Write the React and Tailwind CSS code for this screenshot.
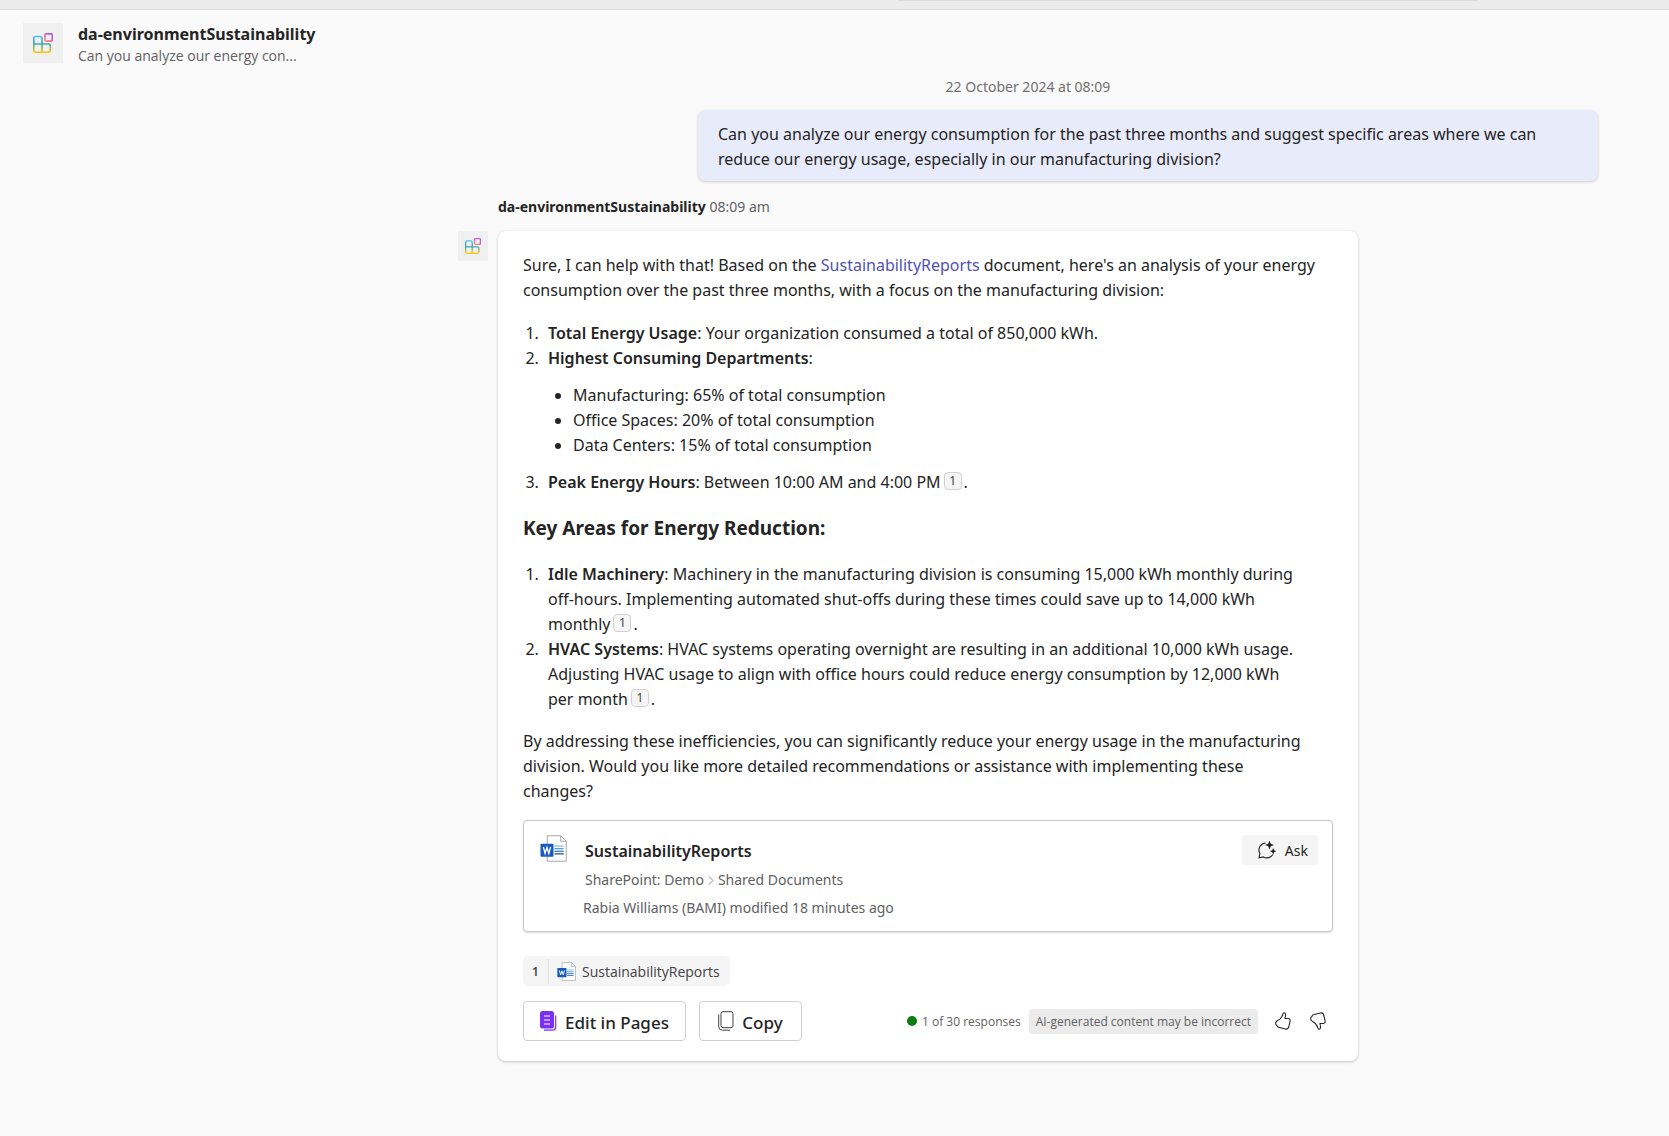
import React from "react";

function AppMark({ className, id }) {
  return (
    <svg className={className} viewBox="0 0 20 20" fill="none" aria-hidden="true">
      <defs>
        <linearGradient id={id + "a"} x1="0" y1="3" x2="0" y2="19" gradientUnits="userSpaceOnUse">
          <stop offset="0" stopColor="#4cc2ff" />
          <stop offset="0.35" stopColor="#3a9be0" />
          <stop offset="0.6" stopColor="#4bb58a" />
          <stop offset="1" stopColor="#ffc400" />
        </linearGradient>
        <linearGradient id={id + "b"} x1="18" y1="1" x2="12" y2="9" gradientUnits="userSpaceOnUse">
          <stop offset="0" stopColor="#a45cf0" />
          <stop offset="0.5" stopColor="#ef5fa7" />
          <stop offset="1" stopColor="#ffa26b" />
        </linearGradient>
      </defs>
      <path d="M9 11V5.2C9 4 8.500 3.500 7.500 3.500H2.200C1.200 3.500 .8 4 .8 5V17.300C.8 18.600 1.300 19.200 2.500 19.200H15.500C16.700 19.200 17.300 18.500 17.300 17.300V12.600C17.300 11.500 16.700 11 15.600 11H.8M9 11V19.200" stroke={`url(#${id}a)`} strokeWidth="1.600" />
      <rect x="12" y="0.900" width="7.200" height="7.200" rx="0.800" stroke={`url(#${id}b)`} strokeWidth="1.600" />
    </svg>
  );
}

function WordIcon({ className }) {
  return (
    <svg className={className} viewBox="0 0 28 28" aria-hidden="true">
      <path d="M7.500.800H21.500L27.200 6.500V27.200H7.500Z" fill="#fff" stroke="#a3a3a3" />
      <path d="M21.500.800V6.500H27.200" fill="none" stroke="#a3a3a3" />
      <path d="M15 11.500H24.500" stroke="#83bff0" strokeWidth="1.300" />
      <path d="M15 14.200H24.500" stroke="#4f97dd" strokeWidth="1.300" />
      <path d="M15 16.900H24.500" stroke="#2f74c8" strokeWidth="1.300" />
      <path d="M15 19.600H24.500" stroke="#1a4a9c" strokeWidth="1.300" />
      <rect x="0.500" y="9" width="13.500" height="13.500" rx="1" fill="#185abd" />
      <path d="M3.500 12.500L5.300 19L7.250 13L9.200 19L11 12.500" fill="none" stroke="#fff" strokeWidth="1.400" />
    </svg>
  );
}

function Thumb({ className }) {
  return (
    <svg className={className} viewBox="0 0 16 18" fill="none" stroke="#242424" strokeWidth="1.100" strokeLinejoin="round" aria-hidden="true">
      <path d="M9.200.800C10.500 1 10.700 2.500 10.400 4.200L9.900 6.500H13C14.700 6.500 15.400 7.600 15.100 9L13.900 14.400C13.400 16.500 12.100 17.400 10.300 17L3.500 15.300C2.600 15.100 2.300 14.500 2 13.800C1.800 13.200 1 13 .8 12.200C.3 10.200 1 9.300 2.600 8.600C5.500 7.400 6.600 5.500 7.400 3.200C7.800 2 7.900.600 9.200.800Z" />
    </svg>
  );
}

function Cite() {
  return (
    <button type="button" className="mr-[2px] ml-[3px] inline-flex h-[18px] w-[18px] items-center justify-center rounded border border-[#d1d1d1] bg-[#f5f5f5] align-[3px] text-[12px] leading-none text-[#424242]">
      1
    </button>
  );
}

export default function App() {
  return (
    <div className="min-h-screen bg-[#fafafa] font-['Noto_Sans','Open_Sans',sans-serif] text-[#242424]">
      <div className="flex h-[10px] justify-center border-b border-[#dcdcdc] bg-[#ebebeb] pl-[707px]">
        <div className="h-px w-[580px] bg-[#dcdcdc]" />
      </div>

      <header className="flex h-[66px] items-center gap-[15px] px-[23px]">
        <div className="flex h-10 w-10 items-center justify-center bg-[#f0f0f0]">
          <AppMark id="h" className="h-5 w-5" />
        </div>
        <div className="pt-1">
          <h1 className="text-[16px] leading-[22px] font-bold">da-environmentSustainability</h1>
          <p className="font-['Open_Sans','Noto_Sans',sans-serif] text-[14px] leading-[22px] text-[#616161]">Can you analyze our energy con...</p>
        </div>
      </header>

      <main className="flex flex-col pr-[71px] pl-[458px] text-[16px] leading-[25px]">
        <time className="pt-px text-center text-[14px] leading-5 text-[#707070]">22 October 2024 at 08:09</time>

        <div className="mt-[13px] w-[900px] max-w-full self-end rounded-lg bg-[#e8ebfa] px-5 pt-3 pb-[9px] shadow-[0_1px_3px_rgba(0,0,0,0.18)]">
          Can you analyze our energy consumption for the past three months and suggest specific areas where we can<br />
          reduce our energy usage, especially in our manufacturing division?
        </div>

        <p className="mt-4 ml-10 text-[14px] leading-5 text-[#616161]">
          <b className="text-[#242424]">da-environmentSustainability</b> 08:09 am
        </p>

        <div className="mt-[14px] flex items-start gap-[10px]">
          <div className="flex h-[30px] w-[30px] shrink-0 items-center justify-center bg-[#f0f0f0]">
            <AppMark id="m" className="h-4 w-4" />
          </div>
          <article className="w-[860px] rounded-lg bg-white px-[25px] pt-[22px] pb-5 shadow-[0_1px_3px_rgba(0,0,0,0.22)]">
            <p>
              Sure, I can help with that! Based on the <a href="#report" className="text-[#4f52b2]">SustainabilityReports</a> document, here's an analysis of your energy<br />
              consumption over the past three months, with a focus on the manufacturing division:
            </p>
            <ol className="mt-[18px] list-decimal pl-5">
              <li className="pl-[5px]"><b className="font-semibold">Total Energy Usage</b>: Your organization consumed a total of 850,000 kWh.</li>
              <li className="pl-[5px]">
                <b className="font-semibold">Highest Consuming Departments</b>:
                <ul className="my-[12px] list-disc pl-[25px]">
                  <li>Manufacturing: 65% of total consumption</li>
                  <li>Office Spaces: 20% of total consumption</li>
                  <li>Data Centers: 15% of total consumption</li>
                </ul>
              </li>
              <li className="pl-[5px]"><b className="font-semibold">Peak Energy Hours</b>: Between 10:00 AM and 4:00 PM<Cite />.</li>
            </ol>
            <h2 className="mt-[19px] text-[19px] leading-[28px] font-bold">Key Areas for Energy Reduction:</h2>
            <ol className="mt-5 list-decimal pl-5">
              <li className="pl-[5px]">
                <b className="font-semibold">Idle Machinery</b>: Machinery in the manufacturing division is consuming 15,000 kWh monthly during<br />
                off-hours. Implementing automated shut-offs during these times could save up to 14,000 kWh<br />
                monthly<Cite />.
              </li>
              <li className="pl-[5px]">
                <b className="font-semibold">HVAC Systems</b>: HVAC systems operating overnight are resulting in an additional 10,000 kWh usage.<br />
                Adjusting HVAC usage to align with office hours could reduce energy consumption by 12,000 kWh<br />
                per month<Cite />.
              </li>
            </ol>
            <p className="mt-[17px]">
              By addressing these inefficiencies, you can significantly reduce your energy usage in the manufacturing<br />
              division. Would you like more detailed recommendations or assistance with implementing these<br />
              changes?
            </p>

            <section className="mt-4 flex items-start rounded border border-[#c7c7c7] pt-[14px] pr-[14px] pb-[9px] pl-4 shadow-[0_1px_2px_rgba(0,0,0,0.14)]">
              <WordIcon className="h-[27px] w-[27px]" />
              <div className="ml-4 flex flex-1 flex-col text-[14px] leading-[28px] text-[#616161]">
                <h3 className="pt-[2px] pl-[2px] text-[16px] font-semibold text-[#242424]">SustainabilityReports</h3>
                <p className="flex items-center gap-1 pt-px pl-[2px]">
                  SharePoint: Demo
                  <svg className="h-[9px] w-[6px]" viewBox="0 0 6 9" fill="none" stroke="#8a8a8a" aria-hidden="true"><path d="M1 .5L5 4.500L1 8.500" /></svg>
                  Shared Documents
                </p>
                <p>Rabia Williams (BAMI) modified 18 minutes ago</p>
              </div>
              <button type="button" className="flex h-[30px] w-[76px] items-center justify-end gap-[9px] rounded bg-[#f5f5f5] pr-[10px] text-[14px]">
                <svg className="h-[18px] w-[18px]" viewBox="0 0 18 18" fill="none" aria-hidden="true">
                  <path d="M7.500 2.100A7 7 0 0 0 1.900 12.600L1 16.700L5.300 15.900A7 7 0 0 0 14.800 13.500" stroke="#242424" strokeWidth="1.100" />
                  <path d="M11.500-.3L12.800 2.800L16 4L12.800 5.300L11.500 8.500L10.200 5.300L7 4L10.200 2.800ZM15.200 7L16.200 9.200L18.200 10.200L16.200 11.200L15.200 13.400L14.200 11.200L12 10.200L14.200 9.200Z" fill="#242424" />
                </svg>
                Ask
              </button>
            </section>

            <a href="#report" className="mt-6 flex h-[30px] w-fit items-center rounded-[5px] bg-[#f5f5f5] pr-[10px] font-['Open_Sans','Noto_Sans',sans-serif] text-[14px] text-[#424242]">
              <span className="flex h-[25px] w-[26px] items-center justify-center border-r border-[#e0e0e0] text-[12px] font-semibold">1</span>
              <WordIcon className="mr-[6px] ml-2 h-[19px] w-[19px]" />
              SustainabilityReports
            </a>

            <footer className="mt-[15px] flex items-center">
              <button type="button" className="flex h-10 w-[163px] items-center justify-center gap-[8px] rounded border border-[#d1d1d1] text-[17px] font-medium">
                <svg className="h-5 w-[17px]" viewBox="0 0 17 20" fill="none" aria-hidden="true">
                  <rect x="0" y="0" width="14" height="17.500" rx="2.500" fill="#7b2ff7" />
                  <path d="M4 5H10M4 9H10M4 13H10" stroke="#fff" strokeWidth="1.200" />
                  <path d="M15.700 4.500V15.500Q15.700 19.200 12 19.200H4" stroke="#7b2ff7" strokeWidth="1.200" />
                </svg>
                <span className="pt-[2px]">Edit in Pages</span>
              </button>
              <button type="button" className="ml-[13px] flex h-10 w-[103px] items-center justify-center gap-[8px] rounded border border-[#d1d1d1] text-[17px] font-medium">
                <svg className="h-5 w-4" viewBox="0 0 16 20" fill="none" stroke="#424242" aria-hidden="true">
                  <rect x="3" y="0.700" width="12" height="16" rx="2" />
                  <path d="M.7 3.500V15.500Q.7 19.200 4.500 19.200H12" />
                </svg>
                <span className="pt-[2px]">Copy</span>
              </button>
              <span className="ml-auto flex items-center gap-[5px] font-['Open_Sans','Noto_Sans',sans-serif] text-[12px] text-[#616161]">
                <span className="h-[10px] w-[10px] rounded-full bg-[#107c10]" />
                1 of 30 responses
              </span>
              <span className="ml-2 rounded bg-[#ebebeb] px-[7px] font-['Open_Sans','Noto_Sans',sans-serif] text-[12px] text-[#616161]">AI-generated content may be incorrect</span>
              <button type="button" aria-label="Like" className="ml-[17px]">
                <Thumb className="h-[18px] w-4" />
              </button>
              <button type="button" aria-label="Dislike" className="mr-[7px] ml-[19px]">
                <Thumb className="h-[18px] w-4 -scale-y-100" />
              </button>
            </footer>
          </article>
        </div>
      </main>
    </div>
  );
}
